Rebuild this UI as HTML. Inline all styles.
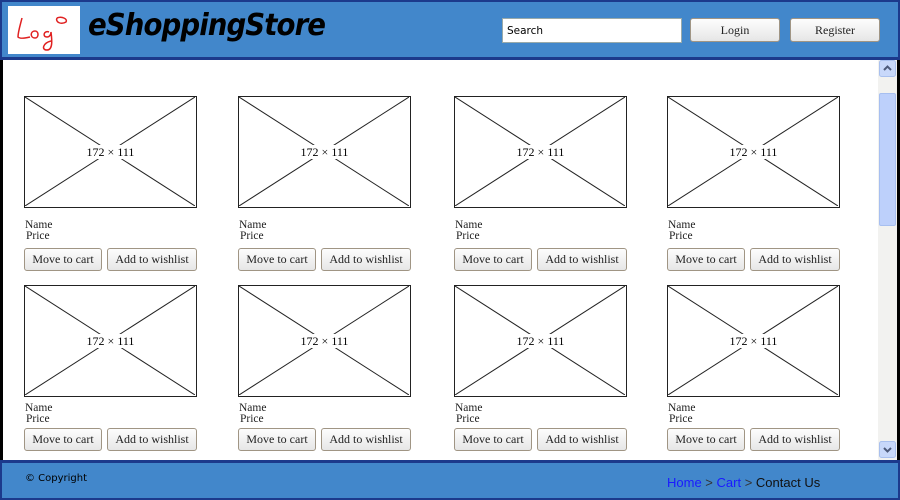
<!DOCTYPE html>
<html><head><meta charset="utf-8"><style>
*{margin:0;padding:0;box-sizing:border-box}
body{width:900px;height:500px;position:relative;overflow:hidden;background:#fff;font-family:"Liberation Serif",serif}
.a{position:absolute}
.hdr{left:0;top:0;width:900px;height:60px;background:#4287cb;border:2px solid #1c3a8c;border-bottom-width:3px}
.ftr{left:0;top:460px;width:900px;height:40px;background:#4287cb;border:2px solid #1c3a8c;border-top-width:3px}
.btn{position:absolute;height:23px;border:1px solid #a09584;border-radius:3px;background:linear-gradient(#fdfdfd,#e6e6e6);font-size:12px;color:#222;text-align:center;line-height:21px;font-family:"Liberation Serif",serif}
.img{position:absolute;width:173px;height:112px;border:1.5px solid #222}
.img span{position:absolute;left:0;right:0;top:48px;text-align:center;font-size:12px}
.t{position:absolute;font-size:11.5px;color:#222;line-height:11px}
</style></head><body>
<div class="a hdr"></div>
<div class="a" style="left:8px;top:6px;width:72px;height:48px;background:#fff"></div>
<svg class="a" style="left:8px;top:6px" width="72" height="48" viewBox="0 0 72 48"><g fill="none" stroke="#e02020" stroke-width="1.5"><path d="M14 12 C12 20 10 26 10 31 C12 33 18 32 22 31"/><path d="M27 25 C22 25 22 32 27 32 C31 32 31 25 27 25"/><path d="M41 26 C36 24 34 31 39 31 C42 31 43 28 43 26 C44 34 45 44 39 44 C33 44 35 37 43 35"/><path d="M49 12 C47 16 53 19 58 16 C60 13 54 10 49 12"/></g></svg>
<div class="a" style="left:88px;top:8px;font-family:'DejaVu Sans',sans-serif;font-weight:bold;font-style:italic;font-size:30px;color:#000;letter-spacing:-1px;transform:scaleX(0.92);transform-origin:left">eShoppingStore</div>
<div class="a" style="left:502px;top:18px;width:180px;height:25px;background:#fff;border:1px solid #9aa;font-family:'DejaVu Sans',sans-serif;font-size:10.5px;line-height:24px;padding-left:4px">Search</div>
<div class="btn" style="left:690px;top:18px;width:90px;height:24px;line-height:22px">Login</div>
<div class="btn" style="left:790px;top:18px;width:90px;height:24px;line-height:22px">Register</div>
<div class="a" style="left:0;top:60px;width:3px;height:400px;background:#000"></div>
<div class="a" style="left:897px;top:60px;width:3px;height:400px;background:#000"></div>
<div class="a" style="left:878px;top:60px;width:19px;height:400px;background:#f2f2f0"></div>
<svg class="a" style="left:879px;top:60px" width="17" height="17"><rect x=".5" y=".5" width="16" height="16" rx="2" fill="#c8d8fa" stroke="#a9c0ee"/><path d="M5 10 L8.5 6.5 L12 10" fill="none" stroke="#4d5a7a" stroke-width="2"/></svg>
<div class="a" style="left:879px;top:93px;width:17px;height:133px;background:#bdd0fb;border:1px solid #a7bff0;border-radius:2px"></div>
<svg class="a" style="left:879px;top:441px" width="17" height="17"><rect x=".5" y=".5" width="16" height="16" rx="2" fill="#c8d8fa" stroke="#a9c0ee"/><path d="M5 7 L8.5 10.5 L12 7" fill="none" stroke="#4d5a7a" stroke-width="2"/></svg>
<div id="g"></div>
<div class="a ftr"></div>
<div class="a" style="left:25px;top:473px;font-family:'DejaVu Sans',sans-serif;font-size:10px">© Copyright</div>
<div class="a" style="left:667px;top:475px;font-family:'Liberation Sans',sans-serif;font-size:13px;color:#333"><span style="color:#1a1aff">Home</span> &gt; <span style="color:#1a1aff">Cart</span> &gt; <span style="color:#111">Contact Us</span></div>
<script>
var xs=[24,238,454,667],rows=[[96,220,248],[285,403,428]],h='';
rows.forEach(function(r){xs.forEach(function(x){
h+='<div class="img" style="left:'+x+'px;top:'+r[0]+'px"><svg width="170" height="109" style="position:absolute;left:0;top:0"><line x1="0" y1="0" x2="170" y2="109" stroke="#222"/><line x1="170" y1="0" x2="0" y2="109" stroke="#222"/></svg><span><b style="background:#fff;font-weight:normal;padding:0 2px">172 × 111</b></span></div>';
h+='<div class="t" style="left:'+(x+1)+'px;top:'+r[1]+'px">Name</div><div class="t" style="left:'+(x+2)+'px;top:'+(r[1]+11)+'px">Price</div>';
h+='<div class="btn" style="left:'+x+'px;top:'+r[2]+'px;width:78px">Move to cart</div><div class="btn" style="left:'+(x+83)+'px;top:'+r[2]+'px;width:90px">Add to wishlist</div>';
});});
document.getElementById('g').innerHTML=h;
</script>
</body></html>
